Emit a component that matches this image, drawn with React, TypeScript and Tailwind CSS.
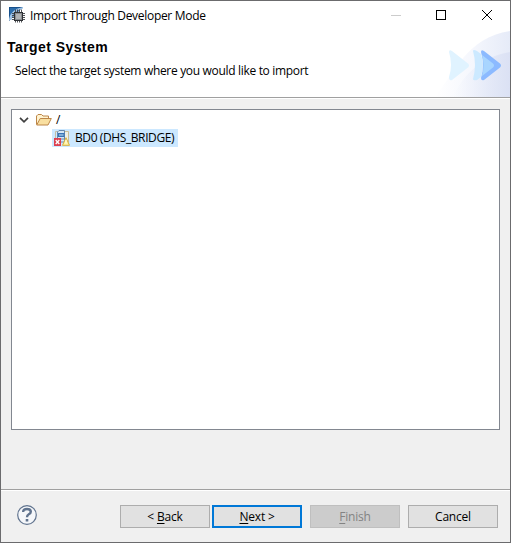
import type { ReactNode } from "react";

function WizardIcon() {
  return (
    <svg width="16" height="16" viewBox="0 0 16 16" className="mb-0.5 shrink-0">
      <path d="M0 0H14L0 14Z" fill="#17508c" />
      <path d="M1 1H10L1 10Z" fill="#2c6dac" />
      <path d="M14 0V1.500Q4 4 2.500 13H0V12Q2 2 14 0Z" fill="#9fc3e6" />
      <path d="M6.500 2.500V15.500M8.500 2.500V15.500M10.500 2.500V15.500M12.500 2.500V15.500M3 6.500H16M3 8.500H16M3 10.500H16M3 12.500H16" stroke="#3f4245" strokeWidth="0.900" />
      <rect x="5" y="5" width="9" height="9" fill="#2e3135" />
      <rect x="6" y="6" width="7" height="7" fill="#8a8d90" />
      <rect x="7" y="7" width="5" height="5" fill="#b0b3b5" />
    </svg>
  );
}

function Banner() {
  return (
    <svg width="75" height="66" viewBox="0 0 75 66" className="shrink-0">
      <defs>
        <linearGradient id="outer" x1="0" x2="1">
          <stop offset="0" stopColor="#ffffff" />
          <stop offset="0.500" stopColor="#f5f7fd" />
          <stop offset="1" stopColor="#e6ebf8" />
        </linearGradient>
        <linearGradient id="inner" x1="0" x2="1">
          <stop offset="0" stopColor="#e6ebf8" stopOpacity="0" />
          <stop offset="1" stopColor="#dbe1f4" />
        </linearGradient>
      </defs>
      <path d="M0 66C18 44 32 6 75 0V66Z" fill="url(#outer)" />
      <path d="M18 66C28 43 48 25 75 21V66Z" fill="url(#inner)" />
      <path d="M14 21Q14 18 17 20L33 32.500Q35 34.500 33 36.500L17 49Q14 50 14 46Q18 34 14 21Z" fill="#e0f3ff" />
      <path d="M46 21Q46 18 49 20L65 32.500Q67 34.500 65 36.500L49 49Q46 50 46 47Q50 34 46 21Z" fill="#8cbaff" />
      <path d="M47 24L58 32.500Q60 34.500 58 36.500L47 45Q50 34 47 24Z" fill="#a8d5ff" />
      <path d="M38 20Q38 18 42 20L46 23Q49.500 34 46 46L42 49Q38 50 38 48Q42 34 38 20Z" fill="#cce9ff" />
    </svg>
  );
}

function FolderIcon() {
  return (
    <svg width="16" height="12" viewBox="0 0 16 12" className="shrink-0">
      <path d="M.5 10.500V2L2 .5H5.500L7 2H12.500V4.500" fill="#fff3cf" stroke="#bd8648" />
      <path d="M.7 11L4.200 4.500H15.300L12 11Z" fill="#f9dfa0" stroke="#bd8648" />
    </svg>
  );
}

function SystemIcon() {
  return (
    <svg width="16" height="16" viewBox="0 0 16 16" className="shrink-0">
      <path d="M10 1.500H14.500V12H11" fill="#eef0e8" stroke="#cbbd94" />
      <path d="M1.500 9V1.500H4" fill="none" stroke="#c5bea5" />
      <path d="M3.500 11V2L5 .5H10.500V12H3.500Z" fill="#d5e7f6" stroke="#6688ad" />
      <rect x="4" y="3" width="6.500" height="4" fill="#3974b5" />
      <path d="M5 5H9.500" stroke="#c8e7fb" />
      <path d="M7 9H10" stroke="#6688ad" />
      <rect x="0" y="8" width="7" height="8" fill="#dc4050" />
      <path d="M1.700 10L5.300 14M5.300 10L1.700 14" stroke="white" strokeWidth="1.300" />
      <path d="M12 7.700L15.500 15.300H8.500Z" fill="#fff2a0" stroke="#d8ad3a" />
      <path d="M12 10V13.500" stroke="#fffce8" />
    </svg>
  );
}

function HelpIcon() {
  return (
    <svg width="20" height="20" viewBox="0 0 20 20" className="shrink-0">
      <circle cx="10" cy="10" r="9.300" fill="#f5f7fa" stroke="#60738e" strokeWidth="1.200" />
      <path d="M6.200 7Q6 4 10 4Q13.800 4 13.800 6.800Q13.800 8.300 11.800 9.300Q10 10.300 10 12.300" fill="none" stroke="#60738e" strokeWidth="2.400" />
      <rect x="8.700" y="14" width="2.600" height="2.500" fill="#60738e" />
    </svg>
  );
}

function Button({ children, className }: { children: ReactNode; className: string }) {
  return (
    <button className={`flex h-[23px] w-[90px] items-center justify-center tracking-[-0.200px] ${className}`}>
      <span>{children}</span>
    </button>
  );
}

const U = ({ children }: { children: string }) => (
  <span className="underline decoration-1 underline-offset-2">{children}</span>
);

export default function App() {
  return (
    <div className="flex h-[543px] w-[511px] flex-col overflow-hidden border border-[#6b6b6d] bg-[#f0f0f0] font-['Open_Sans','Noto_Sans',sans-serif] text-xs leading-4 text-black">
      <div className="flex h-[96px] shrink-0 flex-col bg-white">
        <header className="flex h-[30px] shrink-0 items-center justify-between pl-2">
          <div className="flex items-center gap-[5px]">
            <WizardIcon />
            <span className="whitespace-nowrap tracking-[-0.300px]">Import Through Developer Mode</span>
          </div>
          <svg width="120" height="30" viewBox="0 0 120 30" fill="none">
            <path d="M1 14.500H11" stroke="#cccccc" />
            <rect x="46.500" y="9.500" width="9" height="9" stroke="black" />
            <path d="M92 9L102 19M102 9L92 19" stroke="black" />
          </svg>
        </header>
        <div className="flex h-[66px] justify-between">
          <div className="pl-1.5 pt-2">
            <h1 className="font-['Liberation_Sans',sans-serif] text-sm font-bold leading-4 tracking-[0.430px]">Target System</h1>
            <p className="mt-2 whitespace-nowrap pl-2 tracking-[-0.320px]">Select the target system where you would like to import</p>
          </div>
          <Banner />
        </div>
      </div>
      <div className="h-0.5 shrink-0 border-b border-t border-b-white border-t-[#a0a0a0]" />
      <main className="h-[390px] shrink-0 px-2.5 pt-2.5">
        <div className="h-[321px] w-[489px] border border-[#828790] bg-white pt-px">
          <div className="flex h-[18px] items-center pl-[7px]">
            <svg width="10" height="6" viewBox="0 0 10 6" className="mr-[7px]">
              <path d="M1 .8L5 4.800L9 .8" fill="none" stroke="#404040" strokeWidth="1.700" />
            </svg>
            <FolderIcon />
            <span className="ml-1">/</span>
          </div>
          <div className="ml-10 flex h-[18px] w-[126px] items-center gap-[5px] bg-[#cce8ff] pl-[2px]">
            <SystemIcon />
            <span className="whitespace-nowrap tracking-[-0.400px]">BD0 (DHS_BRIDGE)</span>
          </div>
        </div>
      </main>
      <footer className="flex h-[53px] shrink-0 items-start border-t border-[#a0a0a0] shadow-[inset_0_1px_0_white]">
        <div className="pl-4 pt-[15px]"><HelpIcon /></div>
        <div className="ml-[83px] flex pt-[15px]">
          <Button className="border border-[#adadad] bg-[#e1e1e1]">&lt; <U>B</U>ack</Button>
          <Button className="ml-0.5 border-2 border-[#0078d7] bg-[#e1e1e1]"><U>N</U>ext &gt;</Button>
          <Button className="ml-2 border border-[#bfbfbf] bg-[#cccccc] text-[#838383]"><U>F</U>inish</Button>
          <Button className="ml-2 border border-[#adadad] bg-[#e1e1e1]">Cancel</Button>
        </div>
      </footer>
    </div>
  );
}
